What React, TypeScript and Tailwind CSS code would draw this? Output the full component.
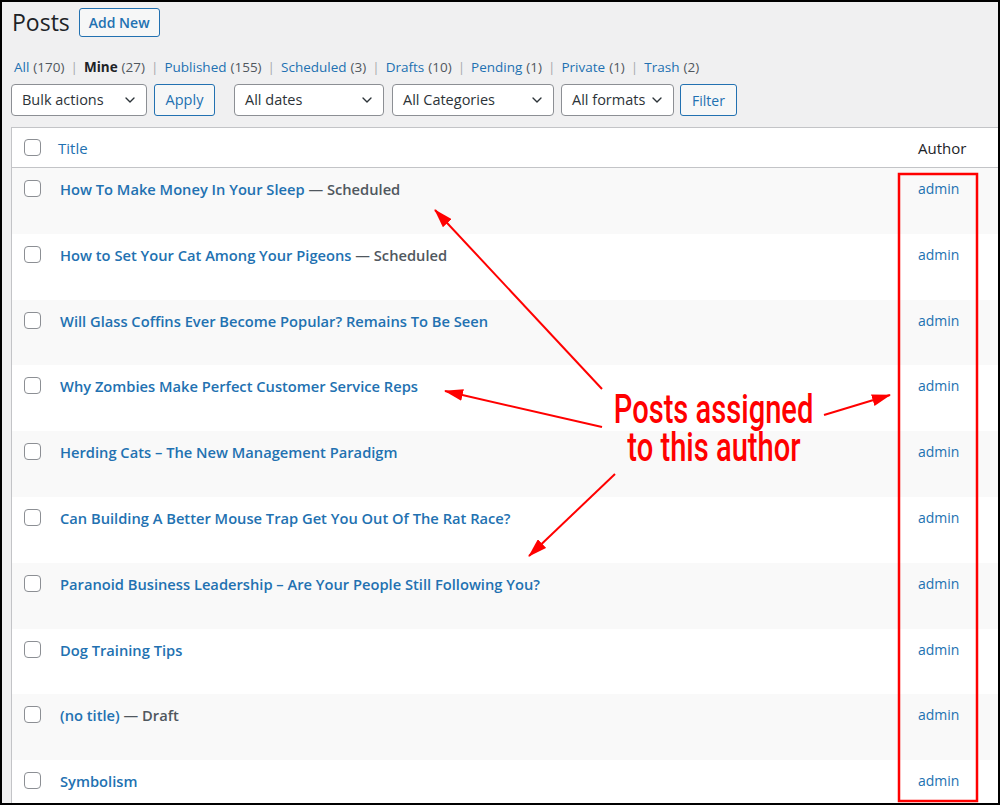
import { ChevronDown } from 'lucide-react';

const statuses = [
  { label: 'All', count: '(170)' },
  { label: 'Mine', count: '(27)', current: true },
  { label: 'Published', count: '(155)' },
  { label: 'Scheduled', count: '(3)' },
  { label: 'Drafts', count: '(10)' },
  { label: 'Pending', count: '(1)' },
  { label: 'Private', count: '(1)' },
  { label: 'Trash', count: '(2)' },
];

const posts = [
  { title: 'How To Make Money In Your Sleep', state: 'Scheduled' },
  { title: 'How to Set Your Cat Among Your Pigeons', state: 'Scheduled' },
  { title: 'Will Glass Coffins Ever Become Popular? Remains To Be Seen' },
  { title: 'Why Zombies Make Perfect Customer Service Reps' },
  { title: 'Herding Cats – The New Management Paradigm' },
  { title: 'Can Building A Better Mouse Trap Get You Out Of The Rat Race?' },
  { title: 'Paranoid Business Leadership – Are Your People Still Following You?' },
  { title: 'Dog Training Tips' },
  { title: '(no title)', state: 'Draft' },
  { title: 'Symbolism' },
];

const Select = ({ label, width }: { label: string; width: string }) => (
  <div
    className={`${width} h-[32px] flex items-center justify-between pl-[10px] pr-[8px] bg-white border border-[#8c8f94] rounded-[4px] text-[14.5px] text-[#2c3338]`}
  >
    <span>{label}</span>
    <ChevronDown size={16} strokeWidth={2} className="text-[#2c3338]" />
  </div>
);

const Checkbox = () => (
  <div className="w-[17px] h-[17px] rounded-[4px] border border-[#8c8f94] bg-white shrink-0" />
);

const Annotations = () => (
  <svg className="absolute inset-0 pointer-events-none" width="1000" height="805">
    <defs>
      <marker id="head" markerUnits="userSpaceOnUse" markerWidth="20" markerHeight="12" refX="18" refY="6" orient="auto">
        <path d="M0 0 L19 6 L0 12 Z" fill="#ff0000" />
      </marker>
    </defs>
    <g stroke="#ff0000" strokeWidth="2" fill="none">
      <line x1="600" y1="387" x2="433" y2="208" markerEnd="url(#head)" />
      <line x1="600" y1="425" x2="443" y2="389" markerEnd="url(#head)" />
      <line x1="613" y1="472" x2="527" y2="554" markerEnd="url(#head)" />
      <line x1="822" y1="413" x2="888" y2="393" markerEnd="url(#head)" />
      <rect x="897" y="172" width="78" height="627" strokeWidth="2.5" />
    </g>
  </svg>
);

const App = () => {
  return (
    <div className="relative w-[1000px] h-[805px] overflow-hidden border-2 border-black bg-[#f0f0f1] font-['Open_Sans',sans-serif] text-[#1d2327]">
      {/* heading */}
      <div className="flex items-center gap-[9px] pl-[10px] pt-[5px]">
        <h1 className="text-[23px] leading-[30px] font-normal">Posts</h1>
        <button className="h-[29px] px-[9px] border border-[#2271b1] rounded-[3px] bg-[#f6f7f7] text-[#2271b1] text-[14px] font-semibold">
          Add New
        </button>
      </div>

      {/* status links */}
      <div className="flex items-center pl-[12px] mt-[20px] text-[13.5px] leading-[20px]">
        {statuses.map((s, i) => (
          <span key={s.label} className="flex items-center">
            <span className={s.current ? 'font-bold text-[#1d2327]' : 'text-[#2271b1]'}>{s.label}</span>
            <span className="ml-[4px] text-[#50575e]">{s.count}</span>
            {i < statuses.length - 1 && <span className="mx-[6px] text-[#a7aaad]">|</span>}
          </span>
        ))}
      </div>

      {/* filters */}
      <div className="flex items-center pl-[9px] mt-[7px]">
        <Select label="Bulk actions" width="w-[136px]" />
        <button className="ml-[7px] h-[32px] w-[61px] border border-[#2271b1] rounded-[3px] bg-[#f6f7f7] text-[#2271b1] text-[14.5px]">
          Apply
        </button>
        <div className="ml-[19px]">
          <Select label="All dates" width="w-[150px]" />
        </div>
        <div className="ml-[8px]">
          <Select label="All Categories" width="w-[162px]" />
        </div>
        <div className="ml-[7px]">
          <Select label="All formats" width="w-[113px]" />
        </div>
        <button className="ml-[6px] h-[32px] w-[57px] border border-[#2271b1] rounded-[3px] bg-[#f6f7f7] text-[#2271b1] text-[14px]">
          Filter
        </button>
      </div>

      {/* table */}
      <div className="ml-[9px] mt-[11px] w-[1000px] border border-[#c3c4c7] bg-white">
        <div className="h-[40px] flex items-center pt-[2px] border-b border-[#c3c4c7] text-[15px]">
          <div className="pl-[12px] w-[46px] -mt-[2px]">
            <Checkbox />
          </div>
          <div className="flex-1 text-[#2271b1]">Title</div>
          <div className="w-[92px]">Author</div>
        </div>
        {posts.map((p, i) => (
          <div
            key={p.title}
            className={`h-[65.8px] flex items-start pt-[11px] ${i % 2 === 0 ? 'bg-[#f9f9f9]' : 'bg-white'}`}
          >
            <div className="pl-[12px] w-[48px] pt-[1px]">
              <Checkbox />
            </div>
            <div className="flex-1 text-[14.7px] leading-[20px] font-semibold">
              <span className="text-[#2271b1]">{p.title}</span>
              {p.state && <span className="text-[#50575e]"> — {p.state}</span>}
            </div>
            <div className="w-[92px] text-[14px] leading-[20px] text-[#2271b1]">admin</div>
          </div>
        ))}
      </div>

      <Annotations />

      <div className="absolute left-[562px] top-[388px] w-[300px] text-center text-[#ff0000] text-[41px] leading-[38px] font-medium font-['Roboto',sans-serif]">
        <div>
          <span className="inline-block scale-x-[0.71] origin-center whitespace-nowrap">Posts assigned</span>
        </div>
        <div>
          <span className="inline-block scale-x-[0.71] origin-center whitespace-nowrap">to this author</span>
        </div>
      </div>
    </div>
  );
};

export default App;
